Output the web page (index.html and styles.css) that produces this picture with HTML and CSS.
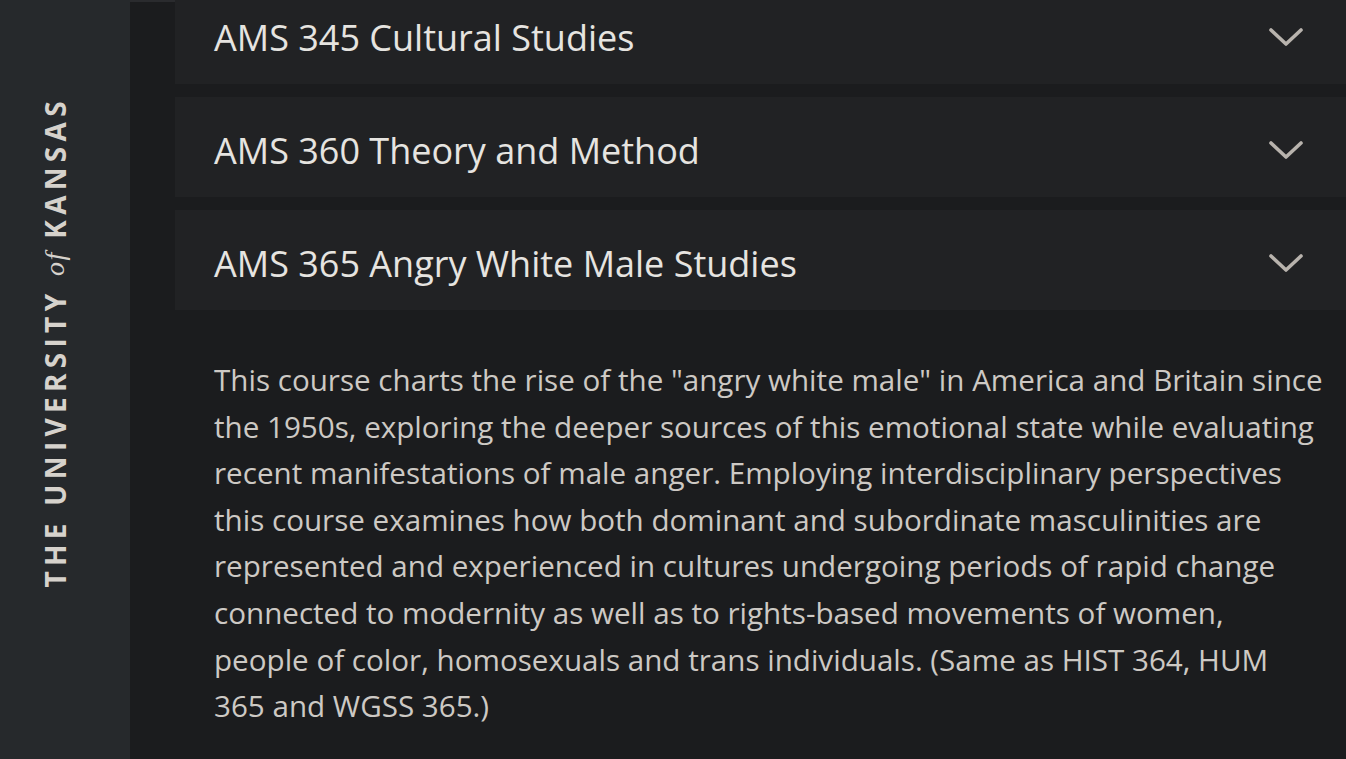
FILE: index.html
```html
<!DOCTYPE html>
<html lang="en">
<head>
<meta charset="utf-8">
<title>American Studies Courses</title>
<link rel="stylesheet" href="styles.css">
</head>
<body>
<aside class="brand">
  <div class="brand-name">THE UNIVERSITY <span class="brand-of">of</span> KANSAS</div>
</aside>
<main class="content">
  <div class="courses">
    <section class="course">
      <button class="course-head"><span class="course-title">AMS 345 Cultural Studies</span><svg class="chev" viewBox="0 0 34 18"><path d="M2 2 L17 16 L32 2"/></svg></button>
    </section>
    <section class="course">
      <button class="course-head"><span class="course-title">AMS 360 Theory and Method</span><svg class="chev" viewBox="0 0 34 18"><path d="M2 2 L17 16 L32 2"/></svg></button>
    </section>
    <section class="course open">
      <button class="course-head"><span class="course-title">AMS 365 Angry White Male Studies</span><svg class="chev" viewBox="0 0 34 18"><path d="M2 2 L17 16 L32 2"/></svg></button>
      <p class="course-desc">This course charts the rise of the "angry white male" in America and Britain since the 1950s, exploring the deeper sources of this emotional state while evaluating recent manifestations of male anger. Employing interdisciplinary perspectives this course examines how both dominant and subordinate masculinities are represented and experienced in cultures undergoing periods of rapid change connected to modernity as well as to rights-based movements of women, people of color, homosexuals and trans individuals. (Same as HIST 364, HUM 365 and WGSS 365.)</p>
    </section>
  </div>
</main>
</body>
</html>
```

FILE: styles.css
```css
html, body {
  margin: 0;
  padding: 0;
  height: 100%;
  overflow: hidden;
}
body {
  display: flex;
  background: #1b1c1e;
  font-family: "Open Sans", sans-serif;
}
.brand {
  width: 130px;
  flex: none;
  background: #26292c;
  display: flex;
  justify-content: flex-start;
  align-items: flex-start;
  padding: 96px 0 0 41px;
  box-sizing: border-box;
}
.brand-name {
  writing-mode: vertical-rl;
  transform: rotate(180deg);
  font-family: "Open Sans", sans-serif;
  font-weight: 700;
  font-size: 28px;
  letter-spacing: 0.19em;
  color: #d6d2cc;
  white-space: nowrap;
  line-height: 1;
}
.brand-of {
  font-family: "Liberation Serif", serif;
  font-style: italic;
  font-weight: 400;
  letter-spacing: 0.05em;
  font-size: 28px;
}
.content {
  flex: 1;
  border-top: 2px solid #2a2b2e;
  padding-left: 45px;
  min-width: 0;
}
.courses {
  margin-top: -18px;
  display: flex;
  flex-direction: column;
  gap: 13px;
}
.course-head {
  all: unset;
  box-sizing: border-box;
  width: 100%;
  height: 100px;
  background: #212224;
  display: flex;
  align-items: center;
  justify-content: space-between;
  padding: 0 43px 0 39px;
}
.course-title {
  font-family: "Open Sans", sans-serif;
  font-size: 36px;
  color: #e6e4e0;
  padding-top: 7px;
}
.chev {
  width: 34px;
  height: 18px;
  margin-top: 6px;
  fill: none;
  stroke: #b8b3ad;
  stroke-width: 3.6;
  stroke-linecap: round;
  stroke-linejoin: round;
}
.course-desc {
  margin: 0;
  padding: 47px 22px 0 39px;
  font-size: 29.6px;
  line-height: 46.6px;
  color: #cdc9c4;
}
```
